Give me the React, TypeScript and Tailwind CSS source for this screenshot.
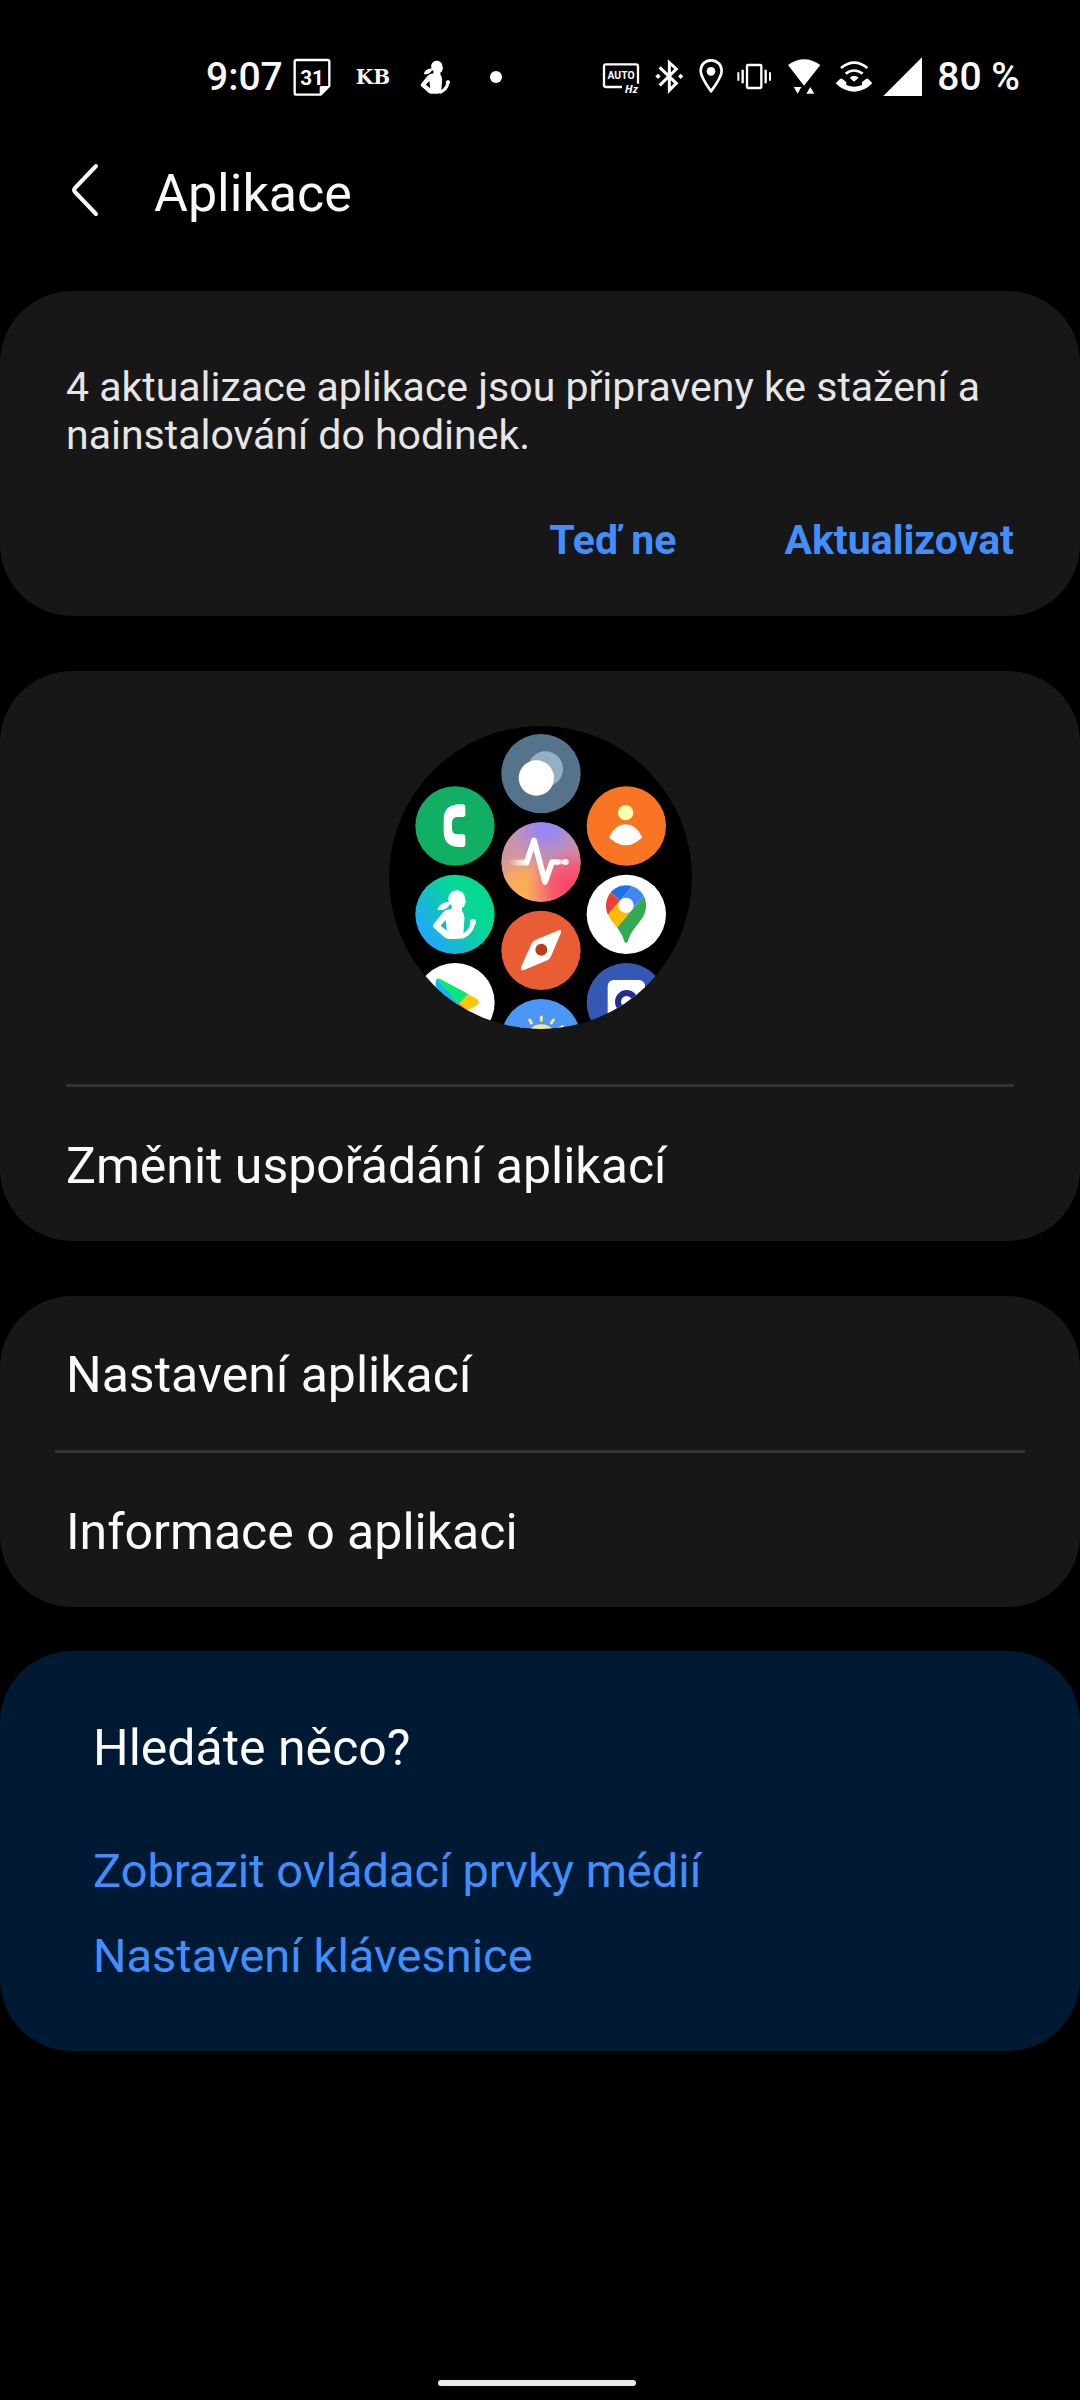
import type { ReactNode } from "react";

/* Figure of a runner, shared by the status bar and the watch preview. */
function Runner({ hole }: { hole: string }) {
  return (
    <g>
      <path d="M230 540c15 0 25 11 25 25 0 3 3 7 3 9 0 2-3 2-3 4-1 9-2 13-9 14v10c6 7 8 16 7 27l-2 30c0 18-6 27-21 27h-18c-13 0-18-5-27-13l-22-19c-5-4-5-9-1-14l26-32c7-8 14-11 26-12l2-9c-7-5-11-13-11-22 0-14 11-25 25-25z" fill="#fff" />
      <path d="M213 575c-20-2-34 5-41 23 14 3 29 1 37-16z" fill="#fff" />
      <path d="M182 646l15-17c2 10 2 20 4 32z" fill={hole} />
      <path d="M246 678c12-5 22-13 28-25l6-19" fill="none" stroke="#fff" strokeWidth="14" strokeLinecap="round" strokeLinejoin="round" />
      <circle cx="279" cy="635" r="9" fill="#fff" />
    </g>
  );
}

function CalendarIcon() {
  return (
    <svg viewBox="309 51 117 120" className="h-10 w-[39px]" aria-hidden="true">
      <path d="M319 60h93q6 0 6 6v72l-26 26h-73q-5 0-5-6V66q0-6 5-6z" fill="none" stroke="#fff" strokeWidth="7" strokeLinejoin="round" />
      <path d="M389 164v-21q0-5 5-5h24z" fill="#fff" />
      <text x="366" y="134" textAnchor="middle" fontSize="62" fontWeight="700" fill="#fff" className="font-['Roboto',sans-serif]">31</text>
    </svg>
  );
}

function RunnerIcon() {
  return (
    <svg viewBox="684 51 99 120" className="ml-[29px] h-10 w-[33px]" aria-hidden="true">
      <g transform="translate(581 -305) scale(0.68)">
        <Runner hole="#000" />
      </g>
    </svg>
  );
}

function AutoHzIcon() {
  return (
    <svg viewBox="39 51 120 120" className="size-10" aria-hidden="true">
      <path d="M99 141H51q-6 0-6-6V79q0-6 6-6h90q6 0 6 6v52" fill="none" stroke="#fff" strokeWidth="7" />
      <text x="96" y="118" textAnchor="middle" fontSize="31" fontWeight="700" fill="#fff" className="font-['Roboto',sans-serif]">AUTO</text>
      <text x="127" y="159" textAnchor="middle" fontSize="34" fontWeight="700" fontStyle="italic" fill="#fff" className="font-['Open_Sans',sans-serif]">Hz</text>
    </svg>
  );
}

function BluetoothIcon() {
  return (
    <svg viewBox="189 51 105 120" className="h-10 w-[35px]" aria-hidden="true">
      <path d="M212 82l50 48-21 21V68l21 19-50 49" fill="none" stroke="#fff" strokeWidth="9" />
      <path d="M207 101l8 8-8 8-8-8zM275 101l8 8-8 8-8-8z" fill="#fff" />
    </svg>
  );
}

function PinIcon() {
  return (
    <svg viewBox="324 51 87 120" className="h-10 w-[29px]" aria-hidden="true">
      <path d="M366 61c-18 0-31 13-31 32 0 15 12 34 31 61 20-27 32-46 32-61 0-19-14-32-32-32z" fill="none" stroke="#fff" strokeWidth="8" strokeLinejoin="round" />
      <circle cx="366" cy="94" r="13" fill="#fff" />
    </svg>
  );
}

function VibrateIcon() {
  return (
    <svg viewBox="441 51 117 120" className="h-10 w-[39px]" aria-hidden="true">
      <rect x="474" y="75" width="43" height="69" rx="3" fill="none" stroke="#fff" strokeWidth="7" />
      <path d="M461 89v41M530 89v41" stroke="#fff" strokeWidth="7" />
      <path d="M448 97v25M543 97v25" stroke="#fff" strokeWidth="6" />
    </svg>
  );
}

function WifiIcon() {
  return (
    <svg viewBox="588 51 117 120" className="h-10 w-[39px]" aria-hidden="true">
      <path d="M597 75q48-34 97 0l-49 62z" fill="#fff" />
      <path d="M614 141h23l-11 20zM652 161h24l-12-20z" fill="#fff" />
    </svg>
  );
}

function WifiCallIcon() {
  return (
    <svg viewBox="735 51 117 120" className="h-10 w-[39px]" aria-hidden="true">
      <path d="M756 84q40-32 79 0M770 101q25-19 51 0" fill="none" stroke="#fff" strokeWidth="8" />
      <path d="M782 113q13-11 27 0l-14 12z" fill="#fff" />
      <path d="M740 130l13-13q3-3 7 0l12 9v9q23 11 47 0v-9l12-9q4-3 7 0l12 13q-23 24-55 25-32-1-55-25z" fill="#fff" />
    </svg>
  );
}

function SignalIcon() {
  return (
    <svg viewBox="882 51 120 120" className="size-10" aria-hidden="true">
      <path d="M883 168L999 52v116z" fill="#fff" />
    </svg>
  );
}

/* Round watch face with a honeycomb of app icons. */
function WatchPreview() {
  return (
    <svg viewBox="27 47 909 909" className="size-[303px]" role="img" aria-label="Aplikace v hodinkách">
      <defs>
        <clipPath id="face"><circle cx="481.5" cy="501.5" r="454.5" /></clipPath>
        <clipPath id="pulseClip"><circle cx="483" cy="455" r="119" /></clipPath>
        <linearGradient id="fit" x1="0.2" y1="0.9" x2="0.75" y2="0.5">
          <stop offset="0" stopColor="#20a8fb" />
          <stop offset="0.5" stopColor="#13c0c4" />
          <stop offset="1" stopColor="#06d894" />
        </linearGradient>
        <radialGradient id="violet"><stop offset="0" stopColor="#8d86ff" /><stop offset="0.4" stopColor="#9486f6" stopOpacity="0.75" /><stop offset="1" stopColor="#a08ae0" stopOpacity="0" /></radialGradient>
        <radialGradient id="rose"><stop offset="0" stopColor="#ff3f62" /><stop offset="0.5" stopColor="#fd4b68" stopOpacity="0.75" /><stop offset="1" stopColor="#f0608a" stopOpacity="0" /></radialGradient>
        <radialGradient id="amber"><stop offset="0" stopColor="#ffb04e" /><stop offset="0.5" stopColor="#fdac58" stopOpacity="0.85" /><stop offset="1" stopColor="#e8a080" stopOpacity="0" /></radialGradient>
        <linearGradient id="tail" gradientUnits="userSpaceOnUse" x1="385" y1="0" x2="440" y2="0"><stop offset="0" stopColor="#fff" stopOpacity="0" /><stop offset="1" stopColor="#fff" /></linearGradient>
      </defs>
      <g clipPath="url(#face)">
        <rect x="27" y="47" width="909" height="909" fill="#000" />

        <circle cx="483" cy="190" r="119" fill="#55738b" />
        <circle cx="496" cy="176" r="53" fill="#94b1c3" />
        <circle cx="469" cy="203" r="53" fill="#fff" />

        <circle cx="225" cy="347" r="119" fill="#11af64" />
        <path d="M241 282h7q8 0 8 8v22q0 8-8 8h-14q-18 0-18 17v18q0 17 18 17h14q8 0 8 8v22q0 8-8 8h-7q-50 0-50-46v-36q0-46 50-46z" fill="#fff" />

        <circle cx="739" cy="347" r="119" fill="#f97524" />
        <circle cx="737" cy="307" r="23" fill="#ffffb0" />
        <path d="M690 376q18-34 47-34t47 34q4 7-4 11-19 18-43 18t-43-18q-8-4-4-11z" fill="#fff" />

        <g clipPath="url(#pulseClip)">
          <rect x="363" y="335" width="240" height="240" fill="#cd93a9" />
          <circle cx="430" cy="545" r="125" fill="url(#amber)" />
          <circle cx="575" cy="535" r="135" fill="url(#rose)" />
          <circle cx="500" cy="345" r="115" fill="url(#violet)" />
        </g>
        <path d="M388 457h52" stroke="url(#tail)" strokeWidth="17" />
        <path d="M440 457l22-67 33 125 21-60h16" fill="none" stroke="#fff" strokeWidth="17" strokeLinecap="round" strokeLinejoin="round" />
        <path d="M530 455h28" stroke="#fff" strokeOpacity="0.75" strokeWidth="13" />
        <circle cx="557" cy="455" r="9" fill="#fff" />

        <circle cx="225" cy="612" r="119" fill="url(#fit)" />
        <Runner hole="#1bb2e0" />

        <circle cx="739" cy="612" r="119" fill="#fff" />
        <g transform="translate(678 525) scale(1.3)">
          <path d="M60.2 2.2C55.8.8 51 0 46.1 0 32 0 19.3 6.4 10.8 16.5l21.8 18.3L60.2 2.2z" fill="#1a73e8" />
          <path d="M10.8 16.5C4.1 24.5 0 34.9 0 46.1c0 8.7 1.7 15.7 4.6 22l28-33.3-21.8-18.3z" fill="#ea4335" />
          <path d="M46.2 28.5c9.8 0 17.7 7.9 17.7 17.7 0 4.3-1.6 8.3-4.2 11.4 0 0 13.9-16.6 27.5-32.7-5.6-10.8-15.3-19-27-22.7L32.6 34.8c3.3-3.8 8.1-6.3 13.6-6.3" fill="#4285f4" />
          <path d="M46.2 63.8c-9.8 0-17.7-7.9-17.7-17.7 0-4.3 1.5-8.3 4.1-11.3l-28 33.3c4.8 10.6 12.8 19.2 21 29.9l34.1-40.5c-3.3 3.9-8.1 6.3-13.5 6.3" fill="#fbbc04" />
          <path d="M59.1 109.2c15.4-24.1 33.3-35 33.3-63 0-7.7-1.9-14.9-5.2-21.3L25.6 98c2.6 3.4 5.3 7.3 7.9 11.3 9.4 14.5 6.8 23.1 12.8 23.1s3.4-8.7 12.8-23.2" fill="#34a853" />
        </g>

        <circle cx="483" cy="720" r="119" fill="#e85d33" />
        <path d="M536 660q9-3 7 7l-30 71q-3 7-9 11l-72 30q-11 3-9-8l31-69q3-8 10-12z" fill="#fff" />
        <circle cx="484" cy="718" r="18" fill="#bb3e17" />

        <circle cx="225" cy="877" r="119" fill="#fff" />
        <path d="M172 806q-5 3-5 9v128l72-62z" fill="#12b5f5" />
        <path d="M169 808q5-6 13-1l83 44-26 30z" fill="#0be775" />
        <path d="M265 851l27 16q10 9 0 17l-28 16-27-20z" fill="#fec60a" />
        <path d="M237 880l27 20-85 50z" fill="#f8383f" />

        <circle cx="739" cy="877" r="119" fill="#3558b4" />
        <rect x="683" y="809" width="112" height="130" rx="18" fill="#fff" />
        <circle cx="740" cy="874" r="26" fill="none" stroke="#232d8d" strokeWidth="18" />

        <circle cx="483" cy="985" r="119" fill="#4b97f5" />
        <circle cx="484" cy="988" r="46" fill="#fce883" />
        <path d="M484 930v-10M454 938l-5-9M514 938l6-9M431 960l-9-5M538 955l9-6" stroke="#fce883" strokeWidth="9" strokeLinecap="round" />
      </g>
    </svg>
  );
}

function StatusBar() {
  return (
    <div className="flex items-center justify-between pt-[57px] pr-[60px] pl-[206px] text-[39px]/[40px] font-medium">
      <div className="flex items-center">
        <time className="mr-[10px]">9:07</time>
        <CalendarIcon />
        <span className="ml-6 font-['DejaVu_Serif',serif] text-xl font-bold">KB</span>
        <RunnerIcon />
        <span className="ml-[38px] size-3 rounded-full bg-white" />
      </div>
      <div className="flex items-center gap-[10px]">
        <AutoHzIcon />
        <BluetoothIcon />
        <PinIcon />
        <VibrateIcon />
        <WifiIcon />
        <WifiCallIcon />
        <SignalIcon />
        <span className="ml-1">80 %</span>
      </div>
    </div>
  );
}

function Row({ children }: { children: ReactNode }) {
  return (
    <button type="button" className="block w-full px-[66px] pt-[49px] pb-[45px] text-left text-[50px]/[60px]">
      {children}
    </button>
  );
}

const suggestions = ["Zobrazit ovládací prvky médií", "Nastavení klávesnice"];

export default function App() {
  return (
    <div className="flex min-h-screen flex-col bg-black font-['Roboto',sans-serif] text-[#fafafa]">
      <StatusBar />

      <header className="flex items-end gap-[54px] px-[70px] pt-[65px] pb-[66px]">
        <button type="button" aria-label="Zpět" className="pb-[8px]">
          <svg viewBox="0 0 30 54" className="h-[54px] w-[30px]" fill="none" stroke="currentColor" strokeWidth="4" strokeLinecap="round" strokeLinejoin="round" aria-hidden="true">
            <path d="M26 3L5 25q-2 2 0 4l21 22" />
          </svg>
        </button>
        <h1 className="text-[52px]/[63px]">Aplikace</h1>
      </header>

      <main>
        <section className="rounded-[72px] bg-[#171717] px-[66px] pt-[72px] pb-[52px]">
          <p className="text-[41px]/[48px] text-[#e6e6e6]">
            4 aktualizace aplikace jsou připraveny ke stažení a nainstalování do hodinek.
          </p>
          <div className="mt-[57px] flex justify-end gap-[108px] text-[41px]/[48px] font-bold text-[#438eff]">
            <button type="button">Teď ne</button>
            <button type="button">Aktualizovat</button>
          </div>
        </section>

        <section className="mt-[55px] rounded-[72px] bg-[#171717]">
          <div className="flex justify-center py-[55px]">
            <WatchPreview />
          </div>
          <hr className="mx-[66px] border-t-[3px] border-[#333333]" />
          <Row>Změnit uspořádání aplikací</Row>
        </section>

        <section className="mt-[55px] rounded-[72px] bg-[#171717]">
          <Row>Nastavení aplikací</Row>
          <hr className="mx-[55px] border-t-[3px] border-[#333333]" />
          <Row>Informace o aplikaci</Row>
        </section>

        <section className="mt-11 rounded-[72px] bg-[#001a33] px-[93px] pt-[67px] pb-[53px]">
          <h2 className="text-[50px]/[60px]">Hledáte něco?</h2>
          <ul className="mt-[50px] text-[47px]/[85px] text-[#438eff]">
            {suggestions.map((label) => (
              <li key={label}>
                <a href="#">{label}</a>
              </li>
            ))}
          </ul>
        </section>
      </main>

      <div className="mt-auto flex justify-center pr-[6px] pb-[14px]">
        <div className="h-[6px] w-[198px] rounded-full bg-[#ebebeb]" />
      </div>
    </div>
  );
}
